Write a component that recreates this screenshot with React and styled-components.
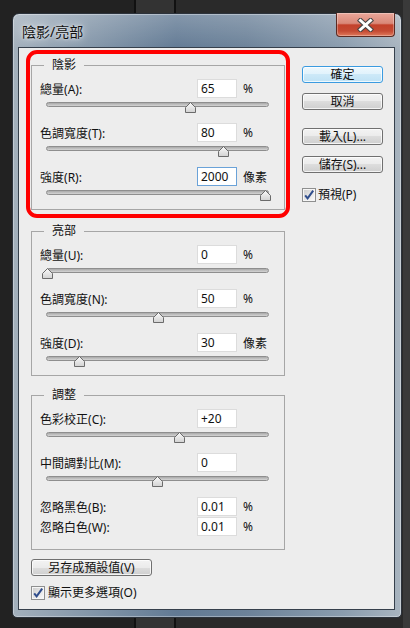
import React from "react";
import styled, { createGlobalStyle } from "styled-components";

const GlobalStyle = createGlobalStyle`
  html, body {
    margin: 0;
    padding: 0;
  }
  body {
    width: 410px;
    height: 628px;
    overflow: hidden;
    background: linear-gradient(to right, #222 0 134px, #111 134px 136px, #333 136px 174px, #111 174px 176px, #2a2a2a 176px 403px, #3a3a3a 403px);
    font-family: "Noto Sans", "Noto Sans CJK TC", sans-serif;
  }
`;

const Page = styled.div`
  padding: 13px 0 0 12px;
`;

const Window = styled.div`
  box-sizing: border-box;
  width: 390px;
  height: 605px;
  padding: 0 6px 7px 5px;
  border: 1px solid #2c333c;
  border-radius: 7px 7px 5px 5px;
  background:
    linear-gradient(to bottom, rgba(255, 255, 255, 0.22), rgba(255, 255, 255, 0) 36px),
    linear-gradient(to right, #a3b0bc 0%, #8799ab 18%, #627a94 42%, #6c8299 60%, #8a9cae 85%, #a8b4bf 100%);
  box-shadow: inset 0 0 0 1px rgba(255, 255, 255, 0.35);
`;

const TitleBar = styled.div`
  display: flex;
  align-items: center;
  justify-content: space-between;
  height: 33px;
  padding-left: 4px;
`;

const Title = styled.span`
  font-size: 14px;
  color: #111;
  text-shadow: 0 0 8px rgba(255, 255, 255, 0.9), 0 0 3px rgba(255, 255, 255, 0.7);
`;

const CloseButton = styled.div`
  align-self: flex-start;
  display: flex;
  align-items: center;
  justify-content: center;
  box-sizing: border-box;
  width: 59px;
  height: 24px;
  margin-top: -1px;
  border: 1px solid #5b2a22;
  border-top: none;
  border-radius: 0 0 4px 4px;
  background: linear-gradient(#eaa79a 0%, #d98878 45%, #c3412b 52%, #c44a33 78%, #e07a5c 100%);
  box-shadow: inset 0 0 0 1px rgba(255, 255, 255, 0.3);
`;

const Client = styled.div`
  box-sizing: border-box;
  display: flex;
  width: 377px;
  height: 563px;
  border: 1px solid #36404c;
  background: #ededed;
`;

const LeftCol = styled.div`
  display: flex;
  flex-direction: column;
  align-items: flex-start;
  padding: 2px 0 0 7px;
`;

const RightCol = styled.div`
  display: flex;
  flex-direction: column;
  align-items: flex-start;
  width: 81px;
  margin-left: 12px;
  padding-top: 18px;
`;

const Highlight = styled.div`
  box-sizing: border-box;
  width: 264px;
  padding: 4px 1px;
  border: 4px solid #ff0000;
  border-radius: 11px;
`;

const Group = styled.fieldset`
  box-sizing: border-box;
  width: 254px;
  min-width: 0;
  margin: ${(p) => p.$top || 0}px 0 0 ${(p) => p.$indent || 0}px;
  padding: 7px 15px ${(p) => p.$pb || 8}px 8px;
  border: 1px solid #a6a6a6;
`;

const Legend = styled.legend`
  margin-left: 4px;
  padding: 0 8px;
  font-size: 12px;
  line-height: 14px;
  color: #111;
`;

const Item = styled.div`
  margin-top: ${(p) => p.$gap}px;
`;

const Row = styled.div`
  display: flex;
  align-items: center;
  height: 19px;
`;

const Label = styled.span`
  width: 157px;
  font-size: 12px;
  color: #111;
  white-space: nowrap;
`;

const Field = styled.div`
  box-sizing: border-box;
  width: 40px;
  height: 19px;
  padding-left: 3px;
  border: 1px solid ${(p) => (p.$focus ? "#6aa2d8" : "#dcdcdc")};
  background: #fff;
  font-size: 12px;
  line-height: 17px;
  color: #111;
`;

const Unit = styled.span`
  margin-left: 6px;
  font-size: 12px;
  color: #111;
`;

const Slider = styled.div`
  position: relative;
  height: 11px;
  margin: 4px 0 0 6px;
`;

const Track = styled.div`
  box-sizing: border-box;
  height: 5px;
  margin-top: 4px;
  border: 1px solid #8e8e8e;
  border-radius: 3px;
  background: linear-gradient(#a9a9a9, #d4d4d4);
`;

const ThumbWrap = styled.div`
  position: absolute;
  top: 0;
  width: 11px;
  height: 11px;
  line-height: 0;
`;

const Button = styled.button`
  box-sizing: border-box;
  width: ${(p) => p.$w || 81}px;
  height: 17px;
  margin: ${(p) => p.$mt || 0}px 0 0 ${(p) => p.$ml || 0}px;
  padding: 0;
  border: 1px solid ${(p) => (p.$primary ? "#3a9be0" : "#707070")};
  border-radius: 3px;
  background: ${(p) =>
    p.$primary
      ? "linear-gradient(#eef8fd, #e0f2fc 50%, #cde9f8 50%, #bfe2f5)"
      : "linear-gradient(#f3f3f3, #ebebeb 50%, #dddddd 50%, #cfcfcf)"};
  box-shadow: inset 0 0 0 1px rgba(255, 255, 255, 0.75);
  font-family: "Noto Sans", "Noto Sans CJK TC", sans-serif;
  font-size: 12px;
  line-height: 14px;
  color: #111;
`;

const CheckRow = styled.div`
  display: flex;
  align-items: center;
  gap: ${(p) => p.$gap || 2}px;
  margin: ${(p) => p.$mt || 0}px 0 0 ${(p) => p.$ml || 0}px;
  font-size: 12px;
  color: #111;
  line-height: 14px;
`;

const Thumb = ({ pos }) => (
  <ThumbWrap style={{ left: `${pos * 218 - 4.5}px` }}>
    <svg width="11" height="11" viewBox="0 0 11 11">
      <defs>
        <linearGradient id="tg" x1="0" y1="0" x2="0" y2="1">
          <stop offset="0" stopColor="#fafafa" />
          <stop offset="1" stopColor="#d2d2d2" />
        </linearGradient>
      </defs>
      <path d="M0.5 10.5 L0.5 5.5 L5.5 0.5 L10.5 5.5 L10.5 10.5 Z" fill="url(#tg)" stroke="#6b6b6b" />
    </svg>
  </ThumbWrap>
);

const CheckBox = () => (
  <svg width="14" height="14" viewBox="0 0 14 14">
    <defs>
      <linearGradient id="cg" x1="0" y1="0" x2="1" y2="1">
        <stop offset="0" stopColor="#cfcfcf" />
        <stop offset="1" stopColor="#f8f8f8" />
      </linearGradient>
    </defs>
    <rect x="0.5" y="0.5" width="13" height="13" fill="#f6f6f6" stroke="#8e8f8f" />
    <rect x="2" y="2" width="10" height="10" fill="url(#cg)" />
    <path d="M3.2 7.4 L5.6 10.4 L11.2 2.6" fill="none" stroke="#2f4d8c" strokeWidth="2" />
  </svg>
);

const CloseX = () => (
  <svg width="17" height="14" viewBox="0 0 17 14">
    <path d="M3.5 2.5 L13.5 11.5 M13.5 2.5 L3.5 11.5" stroke="#444" strokeWidth="5" strokeLinecap="square" />
    <path d="M3.5 2.5 L13.5 11.5 M13.5 2.5 L3.5 11.5" stroke="#fff" strokeWidth="3" strokeLinecap="square" />
  </svg>
);

const shadows = [
  { label: "總量", key: "A", value: "65", unit: "%", pos: 0.66 },
  { label: "色調寬度", key: "T", value: "80", unit: "%", pos: 0.81 },
  { label: "強度", key: "R", value: "2000", unit: "像素", pos: 1, focus: true },
];

const highlights = [
  { label: "總量", key: "U", value: "0", unit: "%", pos: 0 },
  { label: "色調寬度", key: "N", value: "50", unit: "%", pos: 0.51 },
  { label: "強度", key: "D", value: "30", unit: "像素", pos: 0.15 },
];

const adjust = [
  { label: "色彩校正", key: "C", value: "+20", pos: 0.61 },
  { label: "中間調對比", key: "M", value: "0", pos: 0.505 },
  { label: "忽略黑色", key: "B", value: "0.01", unit: "%" },
  { label: "忽略白色", key: "W", value: "0.01", unit: "%", tight: true },
];

const Control = ({ item, first }) => (
  <Item $gap={first ? 0 : item.tight ? 1 : 10}>
    <Row>
      <Label>
        {item.label}({item.key}):
      </Label>
      <Field $focus={item.focus}>{item.value}</Field>
      {item.unit && <Unit>{item.unit}</Unit>}
    </Row>
    {item.pos !== undefined && (
      <Slider>
        <Track />
        <Thumb pos={item.pos} />
      </Slider>
    )}
  </Item>
);

export default function App() {
  return (
    <>
      <GlobalStyle />
      <Page>
        <Window>
          <TitleBar>
            <Title>陰影/亮部</Title>
            <CloseButton>
              <CloseX />
            </CloseButton>
          </TitleBar>
          <Client>
            <LeftCol>
              <Highlight>
                <Group>
                  <Legend>陰影</Legend>
                  {shadows.map((s, i) => (
                    <Control key={s.key} item={s} first={i === 0} />
                  ))}
                </Group>
              </Highlight>
              <Group $top={6} $indent={5}>
                <Legend>亮部</Legend>
                {highlights.map((s, i) => (
                  <Control key={s.key} item={s} first={i === 0} />
                ))}
              </Group>
              <Group $top={12} $indent={5} $pb={13}>
                <Legend>調整</Legend>
                {adjust.map((s, i) => (
                  <Control key={s.key} item={s} first={i === 0} />
                ))}
              </Group>
              <Button $w={121} $mt={9} $ml={5}>
                另存成預設值(V)
              </Button>
              <CheckRow $mt={10} $ml={5} $gap={3}>
                <CheckBox />
                顯示更多選項(O)
              </CheckRow>
            </LeftCol>
            <RightCol>
              <Button $primary>確定</Button>
              <Button $mt={10}>取消</Button>
              <Button $mt={18}>載入(L)...</Button>
              <Button $mt={11}>儲存(S)...</Button>
              <CheckRow $mt={15}>
                <CheckBox />
                預視(P)
              </CheckRow>
            </RightCol>
          </Client>
        </Window>
      </Page>
    </>
  );
}
